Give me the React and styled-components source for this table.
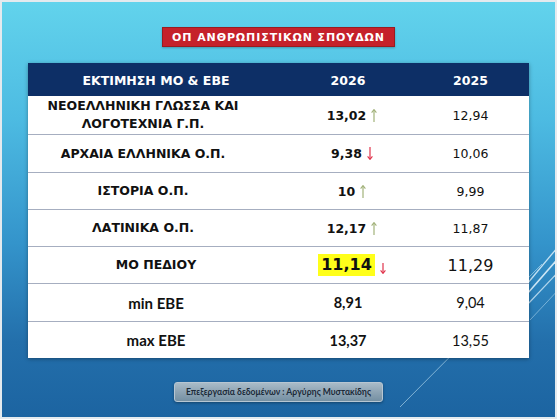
import React from "react";
import styled, { createGlobalStyle } from "styled-components";

const GlobalStyle = createGlobalStyle`
  html, body {
    margin: 0;
    padding: 0;
    background: #ffffff;
  }
  * {
    box-sizing: border-box;
  }
`;

const Slide = styled.div`
  position: relative;
  width: 557px;
  height: 419px;
  border: 2px solid #e4eaee;
  background: linear-gradient(180deg, #62d3ec 0%, #4dbbe2 28%, #3494cb 58%, #236fab 82%, #1c64a1 100%);
  display: flex;
  flex-direction: column;
  align-items: center;
  overflow: hidden;
`;

const Decor = styled.svg`
  position: absolute;
  left: 0;
  top: 0;
  pointer-events: none;
`;

const Title = styled.div`
  position: relative;
  margin-top: 25px;
  height: 20px;
  width: 233px;
  background: #c5212a;
  border: 1px solid #9a1b20;
  color: #ffffff;
  font-family: "DejaVu Sans", sans-serif;
  font-size: 11px;
  font-weight: 600;
  letter-spacing: 0.9px;
  white-space: nowrap;
  display: flex;
  align-items: center;
  justify-content: center;
  box-shadow: 0 1px 2px rgba(0, 0, 0, 0.25);
`;

const Table = styled.div`
  position: relative;
  margin-top: 16px;
  width: 501px;
  background: #ffffff;
  box-shadow: 0 1px 4px rgba(0, 0, 0, 0.35);
`;

const Row = styled.div`
  display: grid;
  grid-template-columns: 256px 128px 117px;
  height: ${(p) => p.$h}px;
  border-top: ${(p) => (p.$first ? "none" : "1.5px solid #a6aec0")};
`;

const HeadRow = styled(Row)`
  background: #0d2f66;
  border-top: none;
`;

const HeadCell = styled.div`
  display: flex;
  align-items: center;
  justify-content: center;
  color: #ffffff;
  font-family: "DejaVu Sans", sans-serif;
  font-weight: 700;
  font-size: 12.5px;
  padding-top: 1px;
`;

const Label = styled.div`
  display: flex;
  align-items: center;
  justify-content: center;
  text-align: center;
  padding-right: ${(p) => p.$shift || 0}px;
  color: #111111;
  font-family: ${(p) => (p.$calibri ? `"Lato", "Open Sans", sans-serif` : `"DejaVu Sans", sans-serif`)};
  font-weight: 700;
  font-size: ${(p) => (p.$calibri ? 15 : 12.5)}px;
  line-height: 18px;
`;

const Value = styled.div`
  display: flex;
  align-items: center;
  justify-content: center;
  gap: 5px;
  padding-left: ${(p) => p.$pl || 0}px;
  color: #111111;
  font-family: ${(p) => (p.$calibri ? `"Lato", "Open Sans", sans-serif` : `"DejaVu Sans", sans-serif`)};
  font-weight: ${(p) => (p.$bold ? 700 : 400)};
  font-size: ${(p) => p.$size || 12.5}px;
`;

const Highlight = styled.span`
  background: #ffff1a;
  padding: 1px 3px 2px;
`;

const ArrowBox = styled.span`
  display: inline-flex;
  align-self: ${(p) => (p.$low ? "flex-end" : "center")};
  margin-bottom: ${(p) => (p.$low ? 9 : 0)}px;
`;

const Footer = styled.div`
  margin-top: 24px;
  width: 209px;
  height: 20px;
  border-radius: 3px;
  border: 1px solid #b7c6d2;
  background: linear-gradient(180deg, #a9bbc8 0%, #8ea4b4 50%, #7590a3 100%);
  box-shadow: 0 1px 3px rgba(0, 0, 0, 0.35);
  display: flex;
  align-items: center;
  justify-content: center;
  color: #1b2a38;
  font-family: "Lato", "Open Sans", sans-serif;
  font-weight: 700;
  font-size: 8.6px;
  white-space: nowrap;
`;

function Arrow({ up, small }) {
  const h = small ? 11 : 13;
  const color = up ? "#a2b27a" : "#e0334b";
  return (
    <svg width="6" height={h} viewBox={`0 0 6 ${h}`}>
      {up ? (
        <>
          <line x1="3" y1="1" x2="3" y2={h} stroke={color} strokeWidth="1.2" />
          <path d="M0.6 3.6 L3 0.6 L5.4 3.6" fill="none" stroke={color} strokeWidth="1.1" />
        </>
      ) : (
        <>
          <line x1="3" y1="0" x2="3" y2={h - 1} stroke={color} strokeWidth="1.2" />
          <path d={`M0.6 ${h - 3.6} L3 ${h - 0.6} L5.4 ${h - 3.6}`} fill="none" stroke={color} strokeWidth="1.1" />
        </>
      )}
    </svg>
  );
}

const rows = [
  { label: ["ΝΕΟΕΛΛΗΝΙΚΗ ΓΛΩΣΣΑ ΚΑΙ", "ΛΟΓΟΤΕΧΝΙΑ Γ.Π."], v26: "13,02", up: true, v25: "12,94", h: 38, shift: 26 },
  { label: ["ΑΡΧΑΙΑ ΕΛΛΗΝΙΚΑ Ο.Π."], v26: "9,38", up: false, v25: "10,06", h: 38, shift: 26 },
  { label: ["ΙΣΤΟΡΙΑ Ο.Π."], v26: "10", up: true, v25: "9,99", h: 37, shift: 26 },
  { label: ["ΛΑΤΙΝΙΚΑ Ο.Π."], v26: "12,17", up: true, v25: "11,87", h: 37, shift: 26 },
];

export default function App() {
  return (
    <>
      <GlobalStyle />
      <Slide>
        <Decor width="557" height="419" viewBox="0 0 557 419">
          <line x1="398" y1="405" x2="540" y2="262" stroke="#cfeefc" strokeOpacity="0.55" strokeWidth="1" />
          <line x1="525" y1="282" x2="560" y2="240" stroke="#eaf8ff" strokeOpacity="0.8" strokeWidth="1.3" />
          <line x1="525" y1="292" x2="560" y2="252" stroke="#eaf8ff" strokeOpacity="0.85" strokeWidth="1.5" />
          <line x1="525" y1="303" x2="560" y2="266" stroke="#eaf8ff" strokeOpacity="0.7" strokeWidth="1.2" />
          <line x1="528" y1="318" x2="560" y2="284" stroke="#d8f2ff" strokeOpacity="0.45" strokeWidth="1" />
        </Decor>

        <Title>ΟΠ ΑΝΘΡΩΠΙΣΤΙΚΩΝ ΣΠΟΥΔΩΝ</Title>

        <Table>
          <HeadRow $h={33} $first>
            <HeadCell>ΕΚΤΙΜΗΣΗ ΜΟ &amp; ΕΒΕ</HeadCell>
            <HeadCell>2026</HeadCell>
            <HeadCell>2025</HeadCell>
          </HeadRow>

          {rows.map((r, i) => (
            <Row key={r.v26} $h={r.h} $first={i === 0}>
              <Label $shift={r.shift}>
                <div>
                  {r.label.map((l) => (
                    <div key={l}>{l}</div>
                  ))}
                </div>
              </Label>
              <Value $bold $pl={8}>
                <span>{r.v26}</span>
                <ArrowBox>
                  <Arrow up={r.up} />
                </ArrowBox>
              </Value>
              <Value>{r.v25}</Value>
            </Row>
          ))}

          <Row $h={37}>
            <Label>ΜΟ ΠΕΔΙΟΥ</Label>
            <Value $bold $size={16} $pl={8}>
              <Highlight>11,14</Highlight>
              <ArrowBox $low>
                <Arrow small />
              </ArrowBox>
            </Value>
            <Value $size={16}>11,29</Value>
          </Row>

          <Row $h={38}>
            <Label $calibri>min ΕΒΕ</Label>
            <Value $calibri $bold $size={14.5}>8,91</Value>
            <Value $calibri $size={14.5}>9,04</Value>
          </Row>

          <Row $h={37}>
            <Label $calibri>max ΕΒΕ</Label>
            <Value $calibri $bold $size={14.5}>13,37</Value>
            <Value $calibri $size={14.5}>13,55</Value>
          </Row>
        </Table>

        <Footer>Επεξεργασία δεδομένων : Αργύρης Μυστακίδης</Footer>
      </Slide>
    </>
  );
}
